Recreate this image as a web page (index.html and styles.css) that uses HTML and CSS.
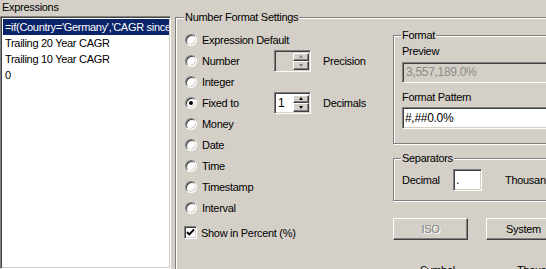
FILE: index.html
```html
<!DOCTYPE html>
<html>
<head>
<meta charset="utf-8">
<link rel="stylesheet" href="styles.css">
</head>
<body>
<div class="app">
  <div class="left">
    <div class="caption">Expressions</div>
    <div class="listbox">
      <div class="item selected">=if(Country='Germany','CAGR since 1990','CAGR')</div>
      <div class="item">Trailing 20 Year CAGR</div>
      <div class="item">Trailing 10 Year CAGR</div>
      <div class="item">0</div>
    </div>
  </div>
  <fieldset class="group main">
    <legend>Number Format Settings</legend>
    <div class="main-grid">
      <div class="options">
        <div class="opt"><span class="radio"></span><span>Expression Default</span></div>
        <div class="opt">
          <div class="opt-label"><span class="radio"></span><span>Number</span></div>
          <div class="spin disabled"><div class="spin-text"></div><div class="spin-btns"><div class="sbtn"><i class="up"></i></div><div class="sbtn"><i class="down"></i></div></div></div>
          <span class="after">Precision</span>
        </div>
        <div class="opt"><span class="radio"></span><span>Integer</span></div>
        <div class="opt">
          <div class="opt-label"><span class="radio checked"></span><span>Fixed to</span></div>
          <div class="spin"><div class="spin-text">1</div><div class="spin-btns"><div class="sbtn"><i class="up"></i></div><div class="sbtn"><i class="down"></i></div></div></div>
          <span class="after">Decimals</span>
        </div>
        <div class="opt"><span class="radio"></span><span>Money</span></div>
        <div class="opt"><span class="radio"></span><span>Date</span></div>
        <div class="opt"><span class="radio"></span><span>Time</span></div>
        <div class="opt"><span class="radio"></span><span>Timestamp</span></div>
        <div class="opt"><span class="radio"></span><span>Interval</span></div>
        <div class="opt check-row">
          <span class="checkbox"><svg width="9" height="9" viewBox="0 0 9 9"><path d="M1 4 L3.3 6.3 L8 1.5" fill="none" stroke="#000" stroke-width="1.9"/></svg></span>
          <span>Show in Percent (%)</span>
        </div>
      </div>
      <div class="side">
        <fieldset class="group format">
          <legend>Format</legend>
          <div class="lbl">Preview</div>
          <div class="field disabled preview">3,557,189.0%</div>
          <div class="lbl pattern-lbl">Format Pattern</div>
          <div class="field pattern">#,##0.0%</div>
        </fieldset>
        <fieldset class="group seps">
          <legend>Separators</legend>
          <div class="sep-row">
            <span class="sep-lbl">Decimal</span>
            <div class="field small">.</div>
            <span class="thou">Thousand</span>
          </div>
        </fieldset>
        <div class="buttons">
          <div class="btn disabled">ISO</div>
          <div class="btn">System</div>
        </div>
        <div class="bottom-labels">
          <span class="bl1">Symbol</span>
          <span class="bl2">Thousand</span>
        </div>
      </div>
    </div>
  </fieldset>
</div>
</body>
</html>
```

FILE: styles.css
```css
html, body {
  margin: 0;
  padding: 0;
  background: #d4d0c8;
}
body {
  font-family: "Liberation Sans", Arial, sans-serif;
  font-size: 11px;
  letter-spacing: -0.3px;
  color: #000;
}
.app {
  width: 546px;
  height: 269px;
  overflow: hidden;
  display: flex;
  align-items: flex-start;
}
.left {
  width: 171px;
  flex: none;
  height: 269px;
  display: flex;
  flex-direction: column;
}
.caption {
  height: 16px;
  line-height: 14px;
  padding-left: 2px;
}
.listbox {
  flex: 1;
  background: #fff;
  border: 1px solid;
  border-color: #808080 #fff #fff #808080;
  box-shadow: inset 1px 1px 0 #404040, inset -1px -1px 0 #d4d0c8;
  padding: 2px 1px 0 2px;
  overflow: hidden;
}
.item {
  height: 16px;
  line-height: 16px;
  padding-left: 2px;
  white-space: nowrap;
  overflow: hidden;
}
.item.selected {
  background: #0a246a;
  color: #fff;
}

fieldset.group {
  margin: 0;
  border: 1px solid #808080;
  box-shadow: inset 1px 1px 0 #fff, 1px 1px 0 #fff;
  min-width: 0;
}
fieldset.group legend {
  padding: 0 1px;
  margin-left: -1px;
  line-height: 13px;
  height: 13px;
  background: #d4d0c8;
}
fieldset.main {
  flex: none;
  width: 430px;
  height: 300px;
  margin: 11px 0 0 4px;
  padding: 5px 0 0 9px;
}
.main-grid {
  display: flex;
}
.options {
  width: 208px;
  flex: none;
}
.opt {
  height: 21px;
  display: flex;
  align-items: center;
  white-space: nowrap;
}
.opt-label {
  width: 89px;
  flex: none;
  display: flex;
  align-items: center;
}
.radio {
  width: 12px;
  height: 12px;
  box-sizing: border-box;
  border-radius: 50%;
  background: #fff;
  border: 1px solid;
  border-color: #808080 #fff #fff #808080;
  box-shadow: inset 1px 1px 0 #404040, inset -1px -1px 0 #d4d0c8;
  margin-right: 5px;
  flex: none;
  display: flex;
  align-items: center;
  justify-content: center;
}
.radio.checked::after {
  content: "";
  width: 4px;
  height: 4px;
  border-radius: 50%;
  background: #000;
}
.check-row {
  margin-top: 4px;
}
.checkbox {
  width: 13px;
  height: 13px;
  box-sizing: border-box;
  background: #fff;
  border: 1px solid;
  border-color: #808080 #fff #fff #808080;
  box-shadow: inset 1px 1px 0 #404040, inset -1px -1px 0 #d4d0c8;
  margin-left: -1px;
  margin-right: 4px;
  display: flex;
  align-items: center;
  justify-content: center;
  flex: none;
}
.checkbox svg { display: block; }

.spin {
  width: 37px;
  height: 22px;
  box-sizing: border-box;
  flex: none;
  display: flex;
  background: #fff;
  border: 1px solid;
  border-color: #808080 #fff #fff #808080;
  box-shadow: inset 1px 1px 0 #404040, inset -1px -1px 0 #d4d0c8;
  padding: 2px 1px 1px 2px;
}
.spin.disabled {
  background: #d4d0c8;
}
.spin-text {
  flex: 1;
  line-height: 17px;
  padding-left: 1px;
  font-size: 12px;
}
.spin-btns {
  width: 16px;
  display: flex;
  flex-direction: column;
}
.sbtn {
  flex: 1;
  background: #d4d0c8;
  box-sizing: border-box;
  border: 1px solid;
  border-color: #fff #404040 #404040 #fff;
  box-shadow: inset -1px -1px 0 #808080;
  display: flex;
  align-items: center;
  justify-content: center;
}
.sbtn i {
  width: 0;
  height: 0;
  border-left: 2.5px solid transparent;
  border-right: 2.5px solid transparent;
}
.sbtn i.up { border-bottom: 3px solid #000; }
.sbtn i.down { border-top: 3px solid #000; }
.spin.disabled .sbtn i.up { border-bottom-color: #808080; }
.spin.disabled .sbtn i.down { border-top-color: #808080; }
.after {
  margin-left: 12px;
}

.side {
  width: 220px;
  flex: none;
}
fieldset.format {
  width: 200px;
  padding: 3px 0 14px 8px;
}
.lbl {
  line-height: 13px;
  height: 13px;
}
.pattern-lbl {
  margin-top: 8px;
}
.field {
  box-sizing: border-box;
  background: #fff;
  border: 1px solid;
  border-color: #808080 #fff #fff #808080;
  box-shadow: inset 1px 1px 0 #404040, inset -1px -1px 0 #d4d0c8;
  padding: 0 3px;
  font-size: 12px;
  white-space: nowrap;
}
.field.disabled {
  background: #d4d0c8;
  color: #8a8a8a;
}
.preview {
  margin-top: 4px;
  height: 21px;
  width: 180px;
  line-height: 19px;
}
.pattern {
  margin-top: 3px;
  height: 22px;
  width: 180px;
  line-height: 20px;
  padding-left: 2px;
}
fieldset.seps {
  margin-top: 8px;
  width: 200px;
  padding: 4px 0 9px 8px;
}
.sep-row {
  display: flex;
  align-items: center;
  height: 22px;
  white-space: nowrap;
}
.sep-lbl {
  width: 51px;
  flex: none;
}
.field.small {
  width: 29px;
  height: 22px;
  line-height: 20px;
  flex: none;
  padding-left: 2px;
}
.thou {
  margin-left: 23px;
}
.buttons {
  margin-top: 17px;
  display: flex;
  gap: 18px;
}
.btn {
  width: 75px;
  height: 22px;
  box-sizing: border-box;
  flex: none;
  background: #d4d0c8;
  border: 1px solid;
  border-color: #fff #404040 #404040 #fff;
  box-shadow: inset -1px -1px 0 #808080;
  display: flex;
  align-items: center;
  justify-content: center;
  font-size: 11px;
}
.btn.disabled {
  color: #808080;
  text-shadow: 1px 1px 0 #fff;
}
.bottom-labels {
  margin-top: 24px;
  display: flex;
  white-space: nowrap;
  line-height: 13px;
}
.bl1 {
  margin-left: 27px;
  width: 97px;
  flex: none;
}
```
